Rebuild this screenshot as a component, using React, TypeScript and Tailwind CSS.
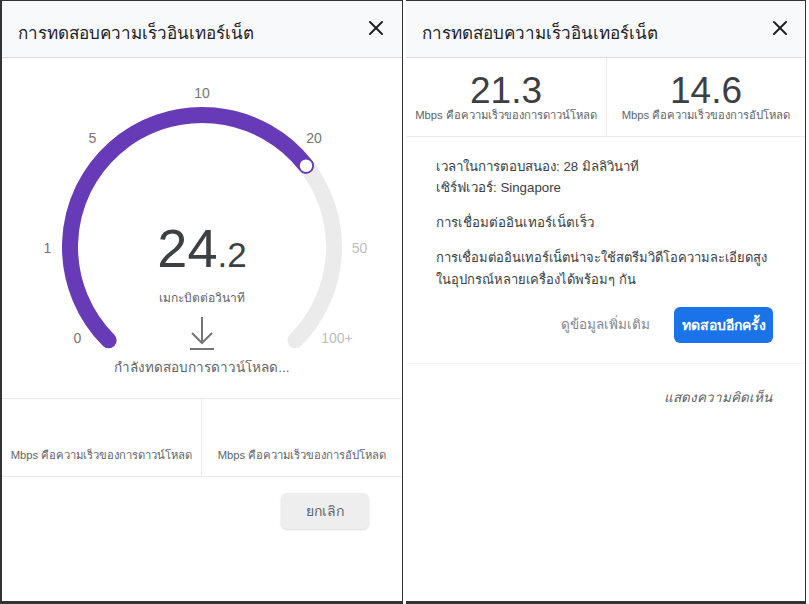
import { X } from "lucide-react";

// gauge geometry (local svg coords, panel content is 400px wide)
const CX = 200;
const CY = 189;
const R = 132;

function pt(deg: number) {
  const a = (deg * Math.PI) / 180;
  return [CX + R * Math.cos(a), CY - R * Math.sin(a)];
}

function Header({ pr }: { pr: string }) {
  return (
    <div className={`h-[57px] shrink-0 bg-[#f8f9fa] border-b border-[#dadce0] flex justify-between items-start pl-4 ${pr}`}>
      <span className="pt-[20px] text-[17px] leading-[26px] text-[#202124]">การทดสอบความเร็วอินเทอร์เน็ต</span>
      <button className="mt-[15px] w-6 h-6 flex items-center justify-center text-[#202124]">
        <X className="w-6 h-6" strokeWidth={2} />
      </button>
    </div>
  );
}

function Gauge() {
  const [sx, sy] = pt(225);
  const [ex, ey] = pt(-45);
  const [px, py] = pt(38);
  const labels = [
    { t: "10", x: 200, y: 35, c: "#757575" },
    { t: "5", x: 90.5, y: 80, c: "#757575" },
    { t: "20", x: 312, y: 80, c: "#757575" },
    { t: "1", x: 45.5, y: 190, c: "#757575" },
    { t: "50", x: 357.5, y: 190, c: "#bdbdbd" },
    { t: "0", x: 75.5, y: 280, c: "#757575" },
    { t: "100+", x: 335, y: 280, c: "#bdbdbd" },
  ];

  return (
    <div className="relative h-[294px] shrink-0">
      <svg className="absolute inset-0" width="400" height="294" viewBox="0 0 400 294">
        <path
          d={`M ${sx} ${sy} A ${R} ${R} 0 1 1 ${ex} ${ey}`}
          fill="none"
          stroke="#ebebeb"
          strokeWidth="16"
          strokeLinecap="round"
        />
        <path
          d={`M ${sx} ${sy} A ${R} ${R} 0 1 1 ${px} ${py}`}
          fill="none"
          stroke="#673ab7"
          strokeWidth="16"
          strokeLinecap="round"
        />
        <circle cx={px} cy={py} r="7" fill="#fff" stroke="#673ab7" strokeWidth="1.5" />
        {labels.map((l) => (
          <text
            key={l.t}
            x={l.x}
            y={l.y}
            textAnchor="middle"
            dominantBaseline="central"
            fontSize="14"
            fill={l.c}
            fontFamily="Liberation Sans, Arial, sans-serif"
          >
            {l.t}
          </text>
        ))}
      </svg>

      {/* reading in the middle of the dial */}
      <div className="absolute left-0 right-0 top-[163px] flex flex-col items-center">
        <div className="flex items-baseline text-[#3c4043]">
          <span className="text-[54px] leading-none">24</span>
          <span className="text-[35px] leading-none">.2</span>
        </div>
        <span className="mt-[14px] text-[12px] leading-[18px] text-[#5f6368]">เมกะบิตต่อวินาที</span>
        <svg className="mt-[10px]" width="24" height="34" viewBox="0 0 24 34" fill="none" stroke="#757575" strokeWidth="2">
          <line x1="12" y1="0" x2="12" y2="26" />
          <polyline points="2,16 12,26 22,16" />
          <line x1="0" y1="32" x2="24" y2="32" />
        </svg>
      </div>
    </div>
  );
}

export default function App() {
  return (
    <div className="w-[809px] h-[604px] bg-white flex font-['Liberation_Sans','Noto_Sans',sans-serif]">
      {/* left: test running */}
      <div className="w-[403px] h-[604px] shrink-0 border-l-2 border-r border-t border-b-[3px] border-[#333] flex flex-col">
        <Header pr="pr-[14px]" />
        <Gauge />
        <div className="mt-[5px] text-center text-[13.5px] leading-[22px] text-[#5f6368]">กำลังทดสอบการดาวน์โหลด...</div>
        <div className="mt-[19px] h-[79px] border-y border-[#ebebeb] flex">
          <div className="w-[200px] border-r border-[#ebebeb] flex flex-col justify-end items-center pb-[12px]">
            <span className="text-[11.25px] leading-[18px] text-[#5f6368] whitespace-nowrap">Mbps คือความเร็วของการดาวน์โหลด</span>
          </div>
          <div className="flex-1 flex flex-col justify-end items-center pb-[12px]">
            <span className="text-[11.25px] leading-[18px] text-[#5f6368] whitespace-nowrap">Mbps คือความเร็วของการอัปโหลด</span>
          </div>
        </div>
        <div className="mt-[16px] flex justify-end pr-[33px]">
          <button className="w-[88px] h-[36px] rounded-md bg-[#eeeeee] shadow-[0_1px_2px_rgba(0,0,0,0.15)] text-[14px] text-[#5f6368]">
            ยกเลิก
          </button>
        </div>
      </div>

      <div className="w-[3px] shrink-0" />

      {/* right: results */}
      <div className="w-[400px] h-[604px] shrink-0 border-r border-t border-b-[3px] border-[#333] flex flex-col">
        <Header pr="pr-[13px]" />

        <div className="h-[79px] border-b border-[#ebebeb] flex">
          <div className="w-[201px] border-r border-[#ebebeb] flex flex-col items-center">
            <span className="pt-[17px] text-[37px] leading-[32px] text-[#3c4043]">21.3</span>
            <span className="text-[11.25px] leading-[17px] text-[#5f6368] whitespace-nowrap">Mbps คือความเร็วของการดาวน์โหลด</span>
          </div>
          <div className="flex-1 flex flex-col items-center">
            <span className="pt-[17px] text-[37px] leading-[32px] text-[#3c4043]">14.6</span>
            <span className="text-[11.25px] leading-[17px] text-[#5f6368] whitespace-nowrap">Mbps คือความเร็วของการอัปโหลด</span>
          </div>
        </div>

        <div className="mt-[19px] px-[30px] text-[13.3px] text-[#3c4043]">
          <p className="leading-[21px]">เวลาในการตอบสนอง: 28 มิลลิวินาที</p>
          <p className="leading-[21px]">เซิร์ฟเวอร์: Singapore</p>
          <p className="mt-[14px] leading-[21px]">การเชื่อมต่ออินเทอร์เน็ตเร็ว</p>
          <p className="mt-[14px] leading-[22px] text-[13px]">
            การเชื่อมต่ออินเทอร์เน็ตน่าจะใช้สตรีมวิดีโอความละเอียดสูง
            <br />
            ในอุปกรณ์หลายเครื่องได้พร้อมๆ กัน
          </p>
        </div>

        <div className="mt-[16px] flex justify-end items-center gap-6 pr-[32px]">
          <span className="text-[13.5px] text-[#80868b]">ดูข้อมูลเพิ่มเติม</span>
          <button className="w-[99px] h-[36px] rounded-md bg-[#1a73e8] text-white text-[14px] font-bold">ทดสอบอีกครั้ง</button>
        </div>

        <div className="mt-[20px] border-t border-[#f1f3f4] pt-[21px] pr-[33px] text-right">
          <span className="italic text-[13.5px] leading-[20px] text-[#5f6368]">แสดงความคิดเห็น</span>
        </div>
      </div>
    </div>
  );
}
